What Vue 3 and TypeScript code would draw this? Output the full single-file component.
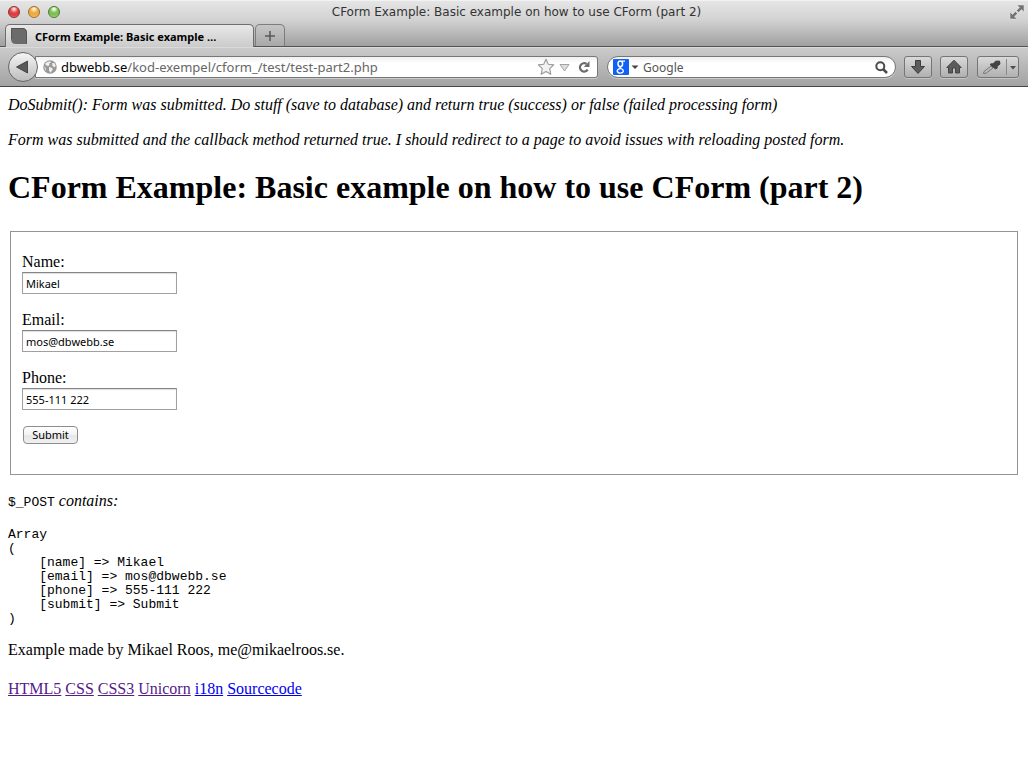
<script setup lang="ts">
import { ref } from 'vue'

interface Field {
  key: string
  label: string
  value: string
}

interface PageLink {
  text: string
  visited: boolean
}

const title = 'CForm Example: Basic example on how to use CForm (part 2)'
const search = ref('')

const fields = ref<Field[]>([
  { key: 'name', label: 'Name:', value: 'Mikael' },
  { key: 'email', label: 'Email:', value: 'mos@dbwebb.se' },
  { key: 'phone', label: 'Phone:', value: '555-111 222' },
])

const links: PageLink[] = [
  { text: 'HTML5', visited: true },
  { text: 'CSS', visited: true },
  { text: 'CSS3', visited: true },
  { text: 'Unicorn', visited: true },
  { text: 'i18n', visited: false },
  { text: 'Sourcecode', visited: false },
]

const dump = `Array
(
    [name] => Mikael
    [email] => mos@dbwebb.se
    [phone] => 555-111 222
    [submit] => Submit
)`
</script>

<template>
  <div class="window">
    <header class="chrome">
      <div class="titlebar">
        <div class="lights">
          <button class="light red" type="button" aria-label="Close"></button>
          <button class="light amber" type="button" aria-label="Minimize"></button>
          <button class="light green" type="button" aria-label="Zoom"></button>
        </div>
        <div class="window-title">{{ title }}</div>
        <button class="fullscreen" type="button" aria-label="Full screen">
          <svg width="16" height="16" viewBox="0 0 16 16">
            <path d="M8 1h7v7l-2.500-2.500-3 3-2-2 3-3zM1 8l2.500 2.500 3-3 2 2-3 3 2.500 2.500H1z" fill="#737373" stroke="#e8e8e8" stroke-width=".5" />
          </svg>
        </button>
      </div>

      <div class="tabs">
        <div class="tab">
          <svg class="favicon" width="16" height="16" viewBox="0 0 16 16">
            <path d="M0 0h11q5 0 5 5v11H5q-5 0-5-5z" fill="#6b6b6b" />
            <path d="M.5 11V.5H11q4.500 0 4.500 4.500v10.500" fill="none" stroke="#555" />
          </svg>
          <span>CForm Example: Basic example …</span>
        </div>
        <button class="new-tab" type="button" aria-label="New tab">
          <svg width="12" height="12" viewBox="0 0 12 12">
            <path d="M6 1v10M1 6h10" stroke="#5a5a5a" stroke-width="1.600" />
          </svg>
        </button>
      </div>

      <nav class="toolbar">
        <button class="back" type="button" aria-label="Back">
          <svg width="14" height="14" viewBox="0 0 14 14">
            <path d="M1.500 7L12.500 1v12z" fill="#595959" stroke="#333" stroke-width=".8" stroke-linejoin="round" />
          </svg>
        </button>
        <div class="address">
          <svg width="14" height="14" viewBox="0 0 14 14">
            <circle cx="7" cy="7" r="6.800" fill="#999" />
            <path d="M2 4l2-2 3-.8 1 1.200-2 1.400.6 1L5 6.200 3.600 5.600zM9 3.500l2-.8 1.800 3-1.200 1.500-2-1zM6 7l3 .8.8 1.700-2.300 3.200-1.500-2.200z" fill="#eee" />
            <path d="M.8 6l2 1.800.4 2.400-.8.600z" fill="#d5d5d5" />
          </svg>
          <div class="url"><b>dbwebb.se</b>/kod-exempel/cform_/test/test-part2.php</div>
          <button class="bare" type="button" aria-label="Bookmark this page">
            <svg width="18" height="18" viewBox="0 0 18 18">
              <path d="M9 1.300l2.300 5 5.400.6-4 3.800 1.100 5.500L9 13.500l-4.800 2.700 1.100-5.500-4-3.800 5.400-.6z" fill="#f2f2f2" stroke="#999" stroke-width="1.100" stroke-linejoin="round" />
            </svg>
          </button>
          <button class="bare" type="button" aria-label="Show history">
            <svg width="11" height="9" viewBox="0 0 11 9">
              <path d="M1 1.500h9L5.500 8z" fill="#ddd" stroke="#a3a3a3" stroke-linejoin="round" />
            </svg>
          </button>
          <button class="bare reload" type="button" aria-label="Reload">
            <svg width="12" height="12" viewBox="0 0 12 12">
              <path d="M8.500 2.900A4.200 4.200 0 1 0 9.700 8.700" fill="none" stroke="#6b6b6b" stroke-width="2.200" />
              <path d="M11.500 0v6H5.800z" fill="#6b6b6b" />
            </svg>
          </button>
        </div>
        <div class="search">
          <button class="engine" type="button" aria-label="Search engine">
            <svg width="26" height="16" viewBox="0 0 26 16">
              <rect width="16" height="16" rx="1" fill="#1160f5" />
              <g fill="none" stroke="#fff">
                <ellipse cx="7.300" cy="4.800" rx="2.300" ry="2.900" stroke-width="1.500" />
                <path d="M9 2.200h3M8 7.500q-2 1 0 2 2.600 1 2.300 2.700-.4 2-3 2T4.200 12q0-2 3.400-2.400" stroke-width="1.300" />
              </g>
              <path d="M18.500 6.500h7L22 10z" fill="#444" />
            </svg>
          </button>
          <input v-model="search" type="text" placeholder="Google" aria-label="Search with Google" />
          <button class="bare" type="button" aria-label="Search">
            <svg width="13" height="13" viewBox="0 0 13 13">
              <circle cx="5.300" cy="5.300" r="4" fill="none" stroke="#4a4a4a" stroke-width="2" />
              <path d="M8 8l4 4" stroke="#4a4a4a" stroke-width="2.500" />
            </svg>
          </button>
        </div>
        <button class="tool" type="button" aria-label="Downloads">
          <svg width="16" height="16" viewBox="0 0 16 16">
            <path d="M5.500 1.500h5v6h4L8 14.500 1.500 7.500h4z" fill="#5c5c5c" stroke="#3d3d3d" />
          </svg>
        </button>
        <button class="tool" type="button" aria-label="Home">
          <svg width="16" height="16" viewBox="0 0 16 16">
            <path d="M8 1.200L15.200 8.500H13.500v5.500h-4V9h-3v5h-4V8.500H.8z" fill="#5c5c5c" stroke="#3d3d3d" stroke-width=".9" />
          </svg>
        </button>
        <button class="tool picker" type="button" aria-label="Color picker">
          <svg width="38" height="20" viewBox="0 0 38 20">
            <path d="M5 14.500l7-5.500 2 2-7 5.200-2.500.3z" fill="#bbb" stroke="#777" />
            <path d="M11 7.500l2-1 1 .5 2.500-2.800 4-.2.500 3-3 2.500.3 1.500-1.800 1z" fill="#444" stroke="#333" stroke-width=".8" />
            <path d="M27.500 2v16" stroke="#8b8b8b" />
            <path d="M31 9h6l-3 3.500z" fill="#4d4d4d" />
          </svg>
        </button>
      </nav>
    </header>

    <main class="page">
      <p><i>DoSubmit(): Form was submitted. Do stuff (save to database) and return true (success) or false (failed processing form)</i></p>
      <p><i>Form was submitted and the callback method returned true. I should redirect to a page to avoid issues with reloading posted form.</i></p>
      <h1>{{ title }}</h1>
      <form @submit.prevent>
        <fieldset>
          <p v-for="field in fields" :key="field.key" class="field">
            <label :for="field.key">{{ field.label }}</label>
            <input :id="field.key" v-model="field.value" type="text" :name="field.key" />
          </p>
          <button class="submit" type="submit">Submit</button>
        </fieldset>
      </form>
      <p class="caption"><code>$_POST</code> <i>contains:</i></p>
      <pre>{{ dump }}</pre>
      <p class="credit">Example made by Mikael Roos, me@mikaelroos.se.</p>
      <p class="links">
        <template v-for="link in links" :key="link.text"><a href="#" :class="{ visited: link.visited }">{{ link.text }}</a>{{ ' ' }}</template>
      </p>
    </main>
  </div>
</template>

<style>
html {
  background: #fff;
}
</style>

<style scoped>
* {
  box-sizing: border-box;
}

.window {
  min-height: 100vh;
  background: #fff;
  color: #000;
  font: 16px/19px "Liberation Serif", serif;
}

button,
input {
  margin: 0;
  font-family: "Noto Sans", sans-serif;
}

svg {
  display: block;
}

.chrome {
  font-family: "Noto Sans", sans-serif;
  background: linear-gradient(#e6e6e6, #d2d2d2 20px, #a0a0a0 46px);
}

.titlebar {
  display: flex;
  align-items: center;
  height: 22px;
  padding: 0 3px 0 8px;
  border-top: 1px solid #f2f2f2;
}

.lights {
  display: flex;
  flex: 1;
  gap: 8px;
}

.light {
  width: 12px;
  height: 12px;
  padding: 0;
  border: 1px solid;
  border-radius: 50%;
}

.red {
  border-color: #8e2b2b;
  background: radial-gradient(circle at 50% 20%, #ffd5d5 8%, #e5484b 40%, #d9363b 65%, #ff9a94);
}

.amber {
  border-color: #a26a20;
  background: radial-gradient(circle at 50% 20%, #fff0d0 8%, #edae45 40%, #eda93d 65%, #ffe98a);
}

.green {
  border-color: #477a2c;
  background: radial-gradient(circle at 50% 20%, #eaffdd 8%, #85bf5c 40%, #7cbd54 65%, #c8f79e);
}

.window-title {
  color: #333;
  font-family: "DejaVu Sans", sans-serif;
  font-size: 12px;
  line-height: 20px;
  white-space: nowrap;
}

.fullscreen {
  display: flex;
  flex: 1;
  justify-content: flex-end;
  padding: 0;
  border: 0;
  background: none;
}

.tabs {
  display: flex;
  align-items: flex-end;
  height: 25px;
  padding-left: 5px;
  border-bottom: 1px solid #545454;
}

.tab {
  z-index: 1;
  display: flex;
  align-items: center;
  gap: 8px;
  width: 249px;
  height: 23px;
  margin-bottom: -1px;
  padding: 0 5px;
  border: 1px solid #6e6e6e;
  border-bottom: 0;
  border-radius: 5px 5px 0 0;
  background: linear-gradient(#e8e8e8, #cbcbcb);
  color: #000;
  font-size: 11px;
  font-weight: 700;
  white-space: nowrap;
}

.new-tab {
  display: flex;
  align-items: center;
  justify-content: center;
  width: 30px;
  height: 22px;
  margin-left: 1px;
  padding: 0;
  border: 1px solid #7d7d7d;
  border-bottom: 0;
  border-radius: 5px 5px 0 0;
  background: linear-gradient(#c6c6c6, #a8a8a8);
}

.toolbar {
  display: flex;
  align-items: center;
  height: 40px;
  padding: 0 9px 0 8px;
  border-top: 1px solid #dadada;
  border-bottom: 1px solid #454545;
  background: linear-gradient(#cbcbcb, #a2a2a2);
}

.back {
  z-index: 1;
  display: flex;
  flex: none;
  align-items: center;
  justify-content: center;
  width: 30px;
  height: 30px;
  padding: 0 3px 0 0;
  border: 1px solid #666;
  border-radius: 50%;
  background: linear-gradient(#f5f5f5, #bdbdbd);
}

.address,
.search {
  display: flex;
  align-items: center;
  height: 22px;
  border: 1px solid #777;
  background: linear-gradient(#f0f0f0, #fff 6px);
  box-shadow: 0 1px #ccc;
}

.address {
  flex: 547;
  gap: 4px;
  min-width: 0;
  margin-left: -3px;
  padding: 0 7px;
  border-radius: 0 3px 3px 0;
}

.url {
  flex: 1;
  overflow: hidden;
  color: #666;
  font-size: 13px;
  line-height: 20px;
  white-space: nowrap;
}

.url b {
  color: #000;
  font-weight: 400;
}

.bare,
.engine {
  flex: none;
  padding: 0;
  border: 0;
  background: none;
}

.reload {
  margin-left: 4px;
}

.search {
  flex: 275;
  min-width: 0;
  margin: 0 8px 0 9px;
  padding: 0 7px 0 5px;
  border-radius: 11px;
}

.search input {
  flex: 1;
  min-width: 0;
  padding: 0 4px;
  border: 0;
  outline: 0;
  background: none;
  font-size: 12px;
}

.search input::placeholder {
  color: #555;
}

.tool {
  display: flex;
  flex: none;
  align-items: center;
  justify-content: center;
  width: 28px;
  height: 22px;
  margin-right: 8px;
  padding: 0;
  border: 1px solid #757575;
  border-radius: 3px;
  background: linear-gradient(#d9d9d9, #b0b0b0);
  box-shadow: 0 1px #c4c4c4;
}

.picker {
  width: 42px;
  margin: 0 0 0 1px;
}

.page {
  padding: 8px;
}

.page p {
  margin: 0 0 16px;
}

h1 {
  margin: 20px 0 25px;
  font-size: 32px;
  line-height: 37px;
}

fieldset {
  margin: 0 2px;
  padding: 20px 11px 30px;
  border: 1px solid #949494;
}

.field label {
  display: block;
  line-height: 20px;
}

.field input {
  display: block;
  width: 155px;
  height: 22px;
  padding: 0 3px;
  border: 1px solid #a0a0a0;
  border-top-color: #858585;
  outline: 0;
  background: #fff;
  box-shadow: inset 0 1px 1px #ddd;
  color: #000;
  font-size: 11px;
}

.submit {
  display: block;
  width: 55px;
  height: 18px;
  margin-left: 1px;
  padding: 0;
  border: 1px solid #8d8d8d;
  border-radius: 4px;
  background: linear-gradient(#fff, #f3f3f3 50%, #e6e6e6 50%, #f0f0f0);
  color: #000;
  font-size: 11px;
  line-height: 16px;
}

.page .caption {
  margin: 16px 0;
}

code,
pre {
  font-family: "Liberation Mono", monospace;
  font-size: 13px;
}

pre {
  margin: 0 0 14px;
  line-height: 14px;
}

.page .credit {
  margin-bottom: 20px;
}

a {
  color: #0000ee;
}

.visited {
  color: #551a8b;
}
</style>
